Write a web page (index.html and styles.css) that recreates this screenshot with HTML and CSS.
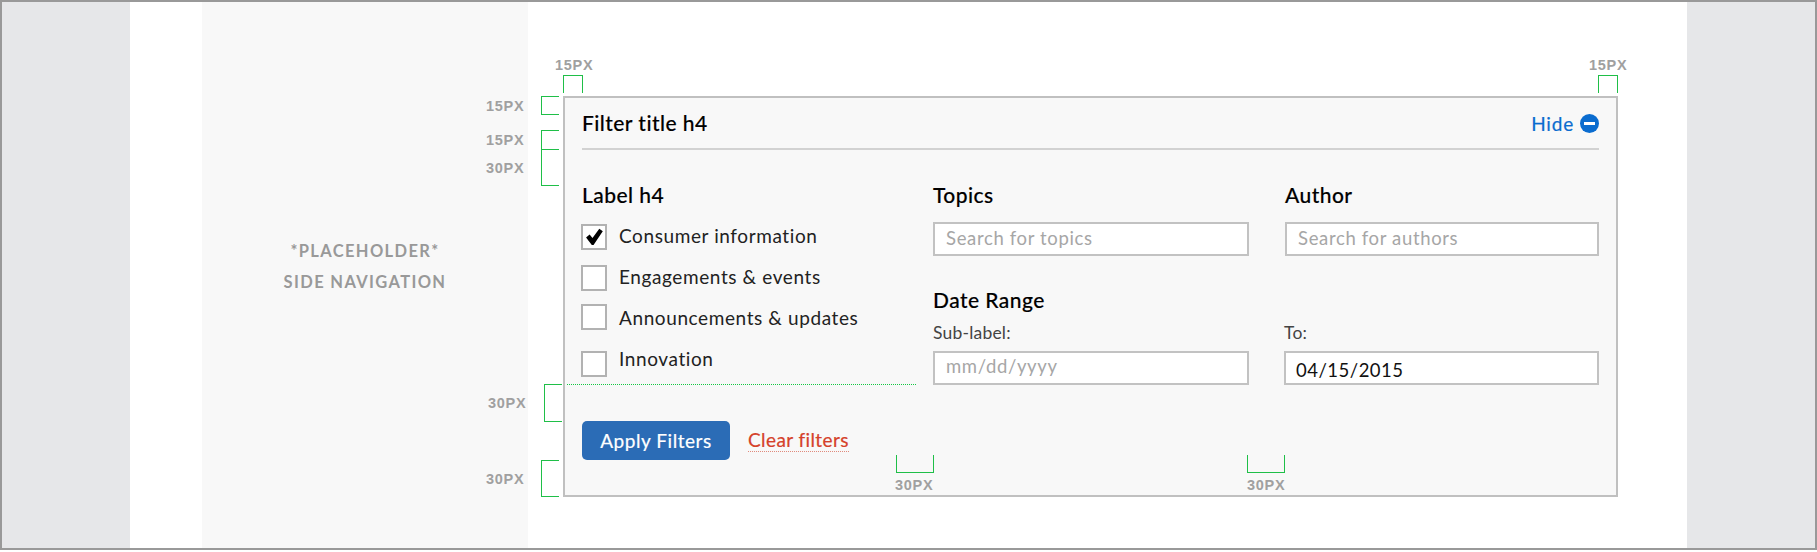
FILE: index.html
```html
<!DOCTYPE html>
<html lang="en">
<head>
<meta charset="utf-8">
<title>Filter panel spec</title>
<link rel="stylesheet" href="styles.css">
</head>
<body>
<div class="frame">
  <div class="gutter"></div>
  <div class="page">
    <aside class="sidenav">
      <p>*PLACEHOLDER*</p>
      <p>SIDE NAVIGATION</p>
    </aside>
    <main class="content">
      <section class="panel">
        <header class="panel-head">
          <h4 class="heading">Filter title h4</h4>
          <a class="hide">Hide
            <svg class="hide-icon" viewBox="0 0 19 19" width="19" height="19"><circle cx="9.5" cy="9.5" r="9.5" fill="#0a6ccf"/><rect x="4" y="8" width="11" height="3" fill="#fff"/></svg>
          </a>
        </header>
        <div class="panel-body">
          <div class="col-left">
            <h4 class="heading label-h">Label h4</h4>
            <div class="check-row"><span class="box"><svg viewBox="0 0 25 25" width="22" height="22"><path d="M3.5 13 L7.5 9.6 L10.8 13.6 L18.5 3 L22.5 6 L12 21.5 L10 21.5 Z" fill="#000"/></svg></span><span>Consumer information</span></div>
            <div class="check-row"><span class="box"></span><span>Engagements &amp; events</span></div>
            <div class="check-row"><span class="box box-up"></span><span>Announcements &amp; updates</span></div>
            <div class="check-row"><span class="box box-down"></span><span>Innovation</span></div>
          </div>
          <div class="col-right">
            <div class="field">
              <h4 class="heading label-h">Topics</h4>
              <input class="input" type="text" placeholder="Search for topics">
            </div>
            <div class="field">
              <h4 class="heading label-h">Author</h4>
              <input class="input" type="text" placeholder="Search for authors">
            </div>
            <div class="field date-from">
              <h4 class="heading">Date Range</h4>
              <label class="sub">Sub-label:</label>
              <input class="input input-date" type="text" placeholder="mm/dd/yyyy">
            </div>
            <div class="field date-to">
              <label class="sub">To:</label>
              <input class="input input-filled" type="text" value="04/15/2015">
            </div>
          </div>
        </div>
        <footer class="panel-foot">
          <button class="apply" type="button">Apply Filters</button>
          <a class="clear">Clear filters</a>
        </footer>
      </section>
    </main>
  </div>
  <div class="gutter"></div>
</div>

<div class="annotations">
  <span class="tag t-top-l">15PX</span>
  <span class="tag t-top-r">15PX</span>
  <span class="tag t-l1">15PX</span>
  <span class="tag t-l2">15PX</span>
  <span class="tag t-l3">30PX</span>
  <span class="tag t-l4">30PX</span>
  <span class="tag t-l5">30PX</span>
  <span class="tag t-b1">30PX</span>
  <span class="tag t-b2">30PX</span>
  <i class="br br-up u1"></i>
  <i class="br br-up u2"></i>
  <i class="br br-left l1"></i>
  <i class="br br-left l2"></i>
  <i class="br br-left l3"></i>
  <i class="br br-left l4"></i>
  <i class="br br-left l5"></i>
  <i class="br br-down d1"></i>
  <i class="br br-down d2"></i>
  <i class="dots"></i>
</div>
</body>
</html>
```

FILE: styles.css
```css
* { box-sizing: border-box; }
html, body { margin: 0; padding: 0; background: #fff; }
body {
  position: relative;
  width: 1817px;
  height: 552px;
  overflow: hidden;
  font-family: Lato, "Open Sans", sans-serif;
  color: #111;
}

.frame {
  display: flex;
  width: 1817px;
  height: 550px;
  border: 2px solid #999;
}
.gutter { flex: 0 0 128px; background: #e6e7e9; }
.page {
  flex: 1;
  display: flex;
  padding-left: 72px;
  background: #fff;
}

.sidenav {
  flex: 0 0 326px;
  background: #f8f8f8;
  padding-top: 234px;
  text-align: center;
  color: #999;
  font-size: 16.5px;
  font-weight: 700;
  letter-spacing: 1.35px;
  line-height: 31px;
}
.sidenav p { margin: 0; }

.content { flex: 1; padding: 94px 0 0 35px; }

.panel {
  width: 1055px;
  height: 401px;
  padding: 0 17px;
  background: #f8f8f8;
  border: 2px solid #c0c0c0;
}
.panel-head {
  display: flex;
  justify-content: space-between;
  align-items: center;
  height: 52px;
  border-bottom: 2px solid #d2d2d2;
}
.heading {
  margin: 0;
  font-size: 21px;
  font-weight: 500;
  line-height: 26px;
  letter-spacing: 0.45px;
  color: #000;
  -webkit-text-stroke: 0.15px #000;
}
.hide {
  display: flex;
  align-items: center;
  gap: 6px;
  color: #0a6ccf;
  font-size: 19px;
  letter-spacing: 0.8px;
  -webkit-text-stroke: 0.2px #0a6ccf;
}
.hide-icon { display: block; }

.panel-body { display: flex; padding-top: 32px; }
.col-left { flex: 0 0 351px; }
.col-left .label-h { margin-bottom: 8px; }

.check-row {
  display: flex;
  align-items: flex-start;
  gap: 12px;
  height: 41px;
  font-size: 19px;
  line-height: 40px;
  letter-spacing: 0.6px;
  color: #222;
}
.box {
  display: flex;
  align-items: center;
  justify-content: center;
  flex: 0 0 26px;
  height: 26px;
  margin: 8px 0 0 -1px;
  background: #fff;
  border: 2px solid #b2b2b2;
}
.box svg { display: block; }
.box-up { margin-top: 6px; }
.box-down { margin-top: 12px; }

.col-right {
  display: grid;
  grid-template-columns: 316px 314px;
  column-gap: 36px;
  align-content: start;
}
.field { display: flex; flex-direction: column; }
.field .label-h { margin-bottom: 14px; }
.date-from { padding-top: 31px; }
.date-to { justify-content: flex-end; margin-left: -1px; }

.sub {
  margin-top: 9px;
  margin-bottom: 7px;
  font-size: 17.5px;
  line-height: 22px;
  letter-spacing: 0.2px;
  color: #444;
}
.input {
  display: block;
  width: 100%;
  height: 34px;
  padding: 0 0 2px 11px;
  background: #fff;
  border: 2px solid #c2c2c2;
  border-radius: 0;
  outline: none;
  font-family: inherit;
  font-size: 18.5px;
  letter-spacing: 0.65px;
  color: #111;
}
.input::placeholder { color: #a6a6a6; opacity: 1; }
.input-date { padding-bottom: 4px; }
.input-filled { padding: 3px 0 0 10px; letter-spacing: 0.5px; }

.panel-foot {
  display: flex;
  align-items: center;
  gap: 18px;
  margin-top: 36px;
}
.apply {
  width: 148px;
  height: 39px;
  padding: 0;
  border: 0;
  border-radius: 5px;
  background: #2b6cb6;
  color: #fff;
  font-family: inherit;
  font-size: 19px;
  letter-spacing: 0.55px;
  -webkit-text-stroke: 0.2px #fff;
}
.clear {
  color: #d5412a;
  font-size: 19px;
  letter-spacing: 0.4px;
  line-height: 22px;
  border-bottom: 1px dotted #e08a7c;
  -webkit-text-stroke: 0.2px #d5412a;
}

.annotations { position: absolute; inset: 0; pointer-events: none; }
.tag {
  position: absolute;
  font-family: "Liberation Sans", Arial, sans-serif;
  font-size: 14.5px;
  font-weight: 700;
  line-height: 16px;
  letter-spacing: 0.7px;
  color: #a0a0a0;
}
.t-top-l { left: 555px; top: 57px; }
.t-top-r { left: 1589px; top: 57px; }
.t-l1 { left: 486px; top: 98px; }
.t-l2 { left: 486px; top: 132px; }
.t-l3 { left: 486px; top: 160px; }
.t-l4 { left: 488px; top: 395px; }
.t-l5 { left: 486px; top: 471px; }
.t-b1 { left: 895px; top: 477px; }
.t-b2 { left: 1247px; top: 477px; }

.br { position: absolute; border: 1px solid #1fbf48; }
.br-up { border-bottom: 0; top: 75px; height: 18px; }
.br-left { border-right: 0; width: 18px; }
.br-down { border-top: 0; top: 455px; width: 38px; height: 18px; }
.u1 { left: 563px; width: 20px; }
.u2 { left: 1598px; width: 20px; }
.l1 { left: 541px; top: 96px; height: 19px; }
.l2 { left: 541px; top: 130px; height: 20px; }
.l3 { left: 541px; top: 149px; height: 37px; }
.l4 { left: 544px; top: 384px; height: 38px; }
.l5 { left: 541px; top: 460px; height: 37px; }
.d1 { left: 896px; }
.d2 { left: 1247px; }
.dots {
  position: absolute;
  left: 567px;
  top: 384px;
  width: 350px;
  height: 1px;
  background: repeating-linear-gradient(90deg, #14c844 0 1px, transparent 1px 2px);
}
```
